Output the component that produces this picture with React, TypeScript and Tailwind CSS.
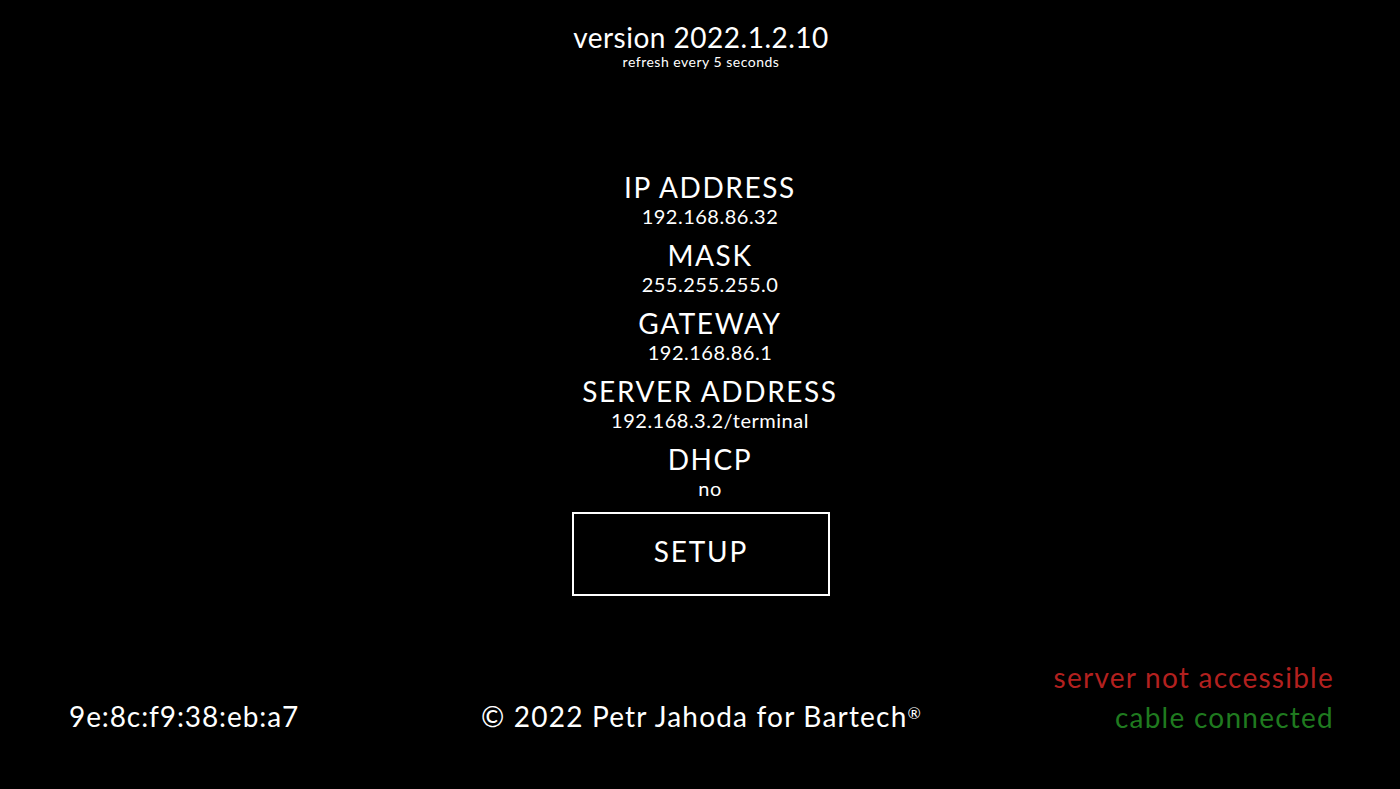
import React from "react";

const rows = [
  ["IP ADDRESS", "192.168.86.32"],
  ["MASK", "255.255.255.0"],
  ["GATEWAY", "192.168.86.1"],
  ["SERVER ADDRESS", "192.168.3.2/terminal"],
  ["DHCP", "no"],
];

export default function App() {
  return (
    <div
      className="w-[1400px] h-[789px] bg-black text-white flex flex-col items-center overflow-hidden"
      style={{ fontFamily: "Lato, 'Noto Sans', sans-serif" }}
    >
      <div className="flex flex-col items-center pt-[20px]">
        <div className="text-[28px] leading-[34px] pl-[2px] tracking-[0.5px]">version 2022.1.2.10</div>
        <div className="text-[14px] leading-[16px] pl-[2px] tracking-[0.5px]">refresh every 5 seconds</div>
      </div>
      <div className="flex flex-col items-center mt-[100px] pl-[20px]">
        {rows.map(([k, v]) => (
          <div key={k} className="flex flex-col items-center h-[68px]">
            <div className="text-[28px] leading-[34px] tracking-[1.6px]">{k}</div>
            <div className="text-[20px] leading-[24px] tracking-[0.5px]">{v}</div>
          </div>
        ))}
        <div className="mt-[2px] w-[258px] h-[84px] border-2 border-white flex items-center justify-center text-[28px] leading-[34px] tracking-[1.8px] pb-[6px] -ml-[18px]">
          SETUP
        </div>
      </div>
      <div className="w-full flex items-end justify-between pl-[69px] pr-[66px] mt-auto pb-[56px]">
        <div className="text-[28px] leading-[34px] w-[300px] tracking-[0.9px]">9e:8c:f9:38:eb:a7</div>
        <div className="text-[28px] leading-[34px] tracking-[1.2px]">
          © 2022 Petr Jahoda for Bartech<sup className="text-[16px]">®</sup>
        </div>
        <div className="flex flex-col items-end w-[300px] text-[28px] leading-[40px] tracking-[1.25px] -mb-[4px]">
          <div className="text-[#b3201f]">server not accessible</div>
          <div className="text-[#1f7a1f]">cable connected</div>
        </div>
      </div>
    </div>
  );
}
